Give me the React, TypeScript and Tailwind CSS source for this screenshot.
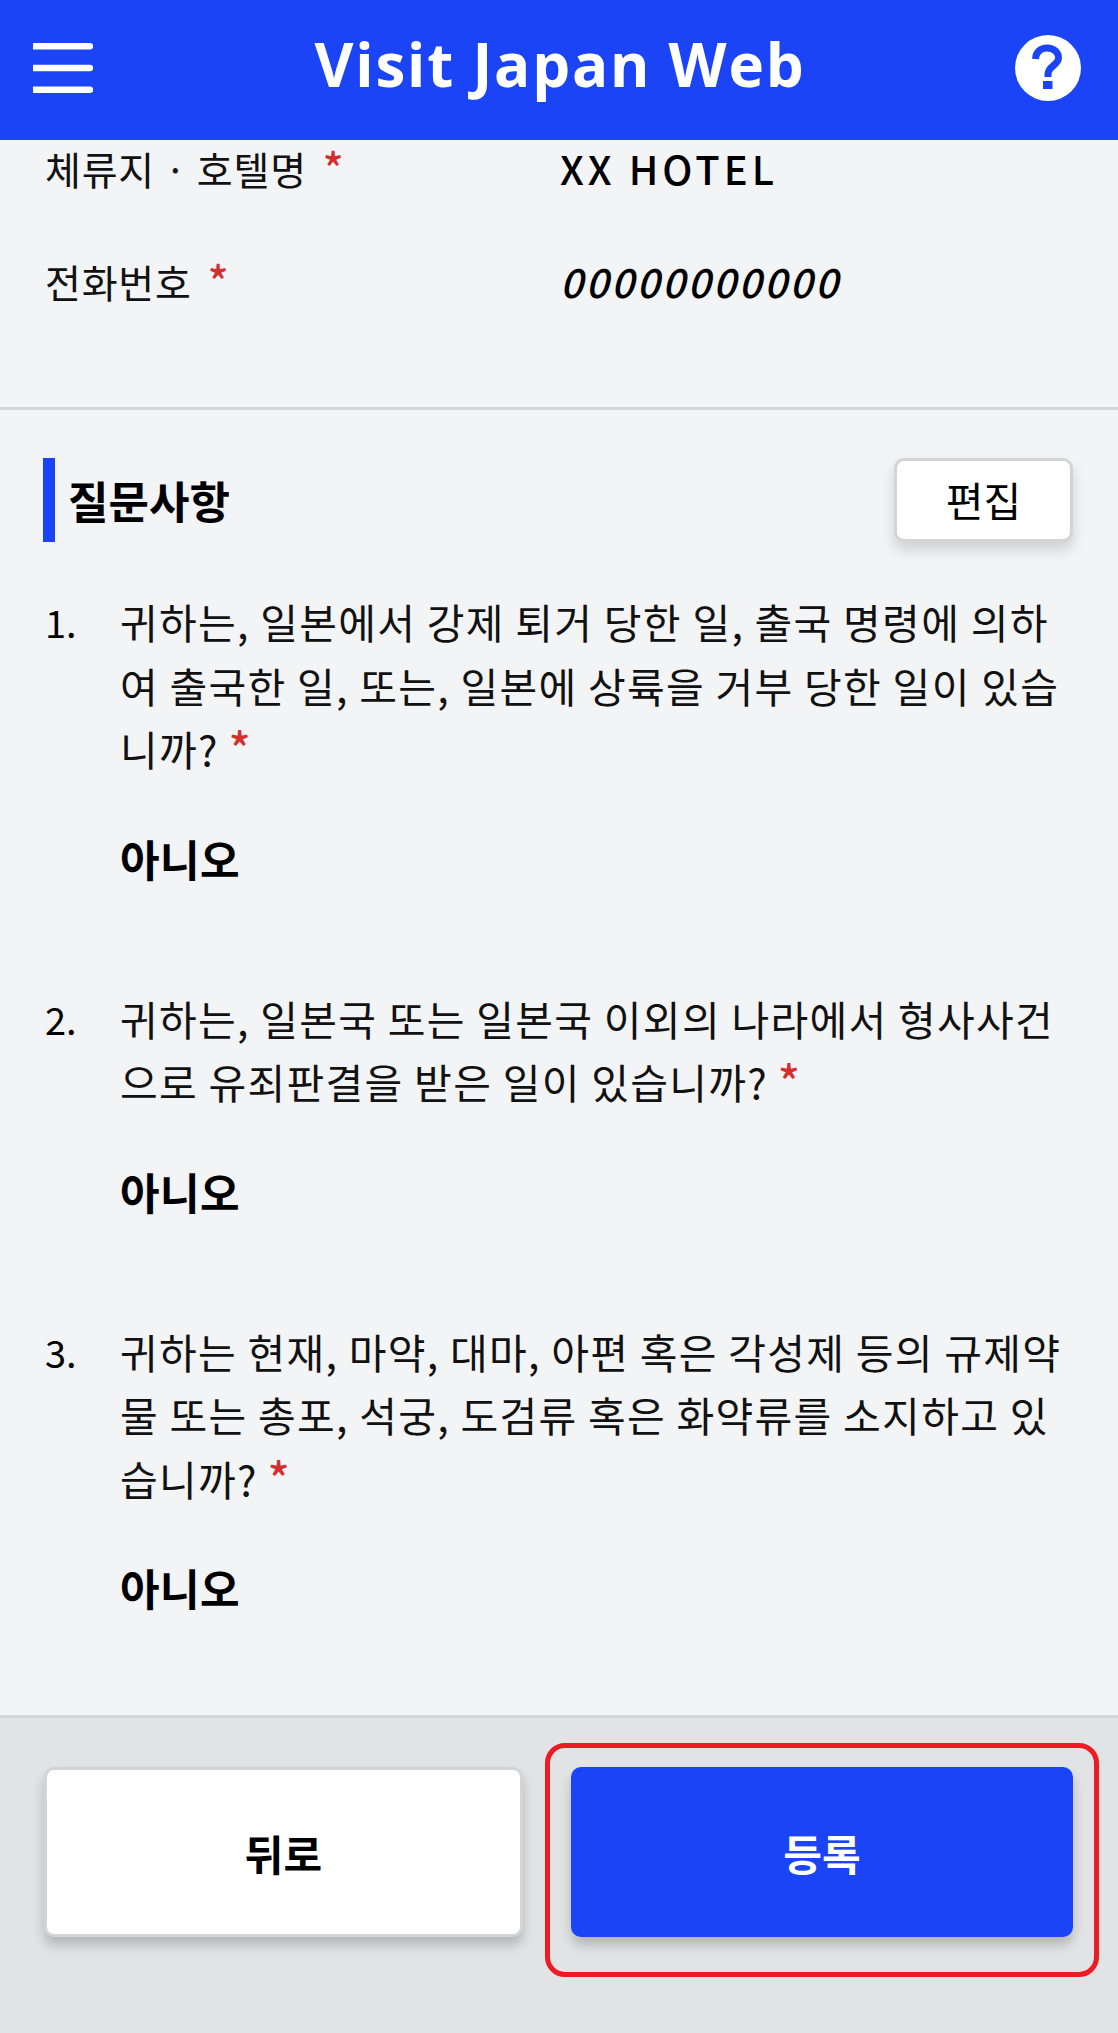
const KR = "font-['Noto_Sans_CJK_KR','Noto_Sans',sans-serif]"

function Star({ gap }: { gap: string }) {
  return <span className={`inline-block leading-none text-[#d32f2f] text-[1.1em] font-medium ${gap}`}>*</span>
}

function InfoRow({ label, value, valueClass }: { label: string; value: string; valueClass: string }) {
  return (
    <div className="flex items-center h-[64px] leading-[64px]">
      <div className="w-[515px] text-[39px] tracking-[0.8px] text-[#111]">
        {label}
        <Star gap="ml-[16px]" />
      </div>
      <div className={`text-[40px] font-medium text-black ${valueClass}`}>{value}</div>
    </div>
  )
}

function Question({ num, text, answer }: { num: string; text: string; answer: string }) {
  return (
    <div className="flex">
      <div className="w-[75px] shrink-0 text-[38px] leading-[64px]">{num}</div>
      <div className="flex-1">
        <div className="text-[41px] leading-[63.5px] tracking-[1.3px] text-[#111]">
          {text}
          <Star gap="ml-[10px]" />
        </div>
        <div className="mt-[45px] text-[43px] font-bold leading-[64px] tracking-[0.5px] text-black">{answer}</div>
      </div>
    </div>
  )
}

export default function App() {
  return (
    <div className={`${KR} w-full h-[2033px] flex flex-col bg-[#f3f4f6] overflow-hidden`}>
      <header className="h-[140px] shrink-0 bg-[#1b44f6] flex items-center justify-between pl-[33px] pr-[37px] pb-[4px]">
        <svg width="60" height="50" viewBox="0 0 60 50" fill="#fff">
          <path d="M0 0H57a3.25 3.25 0 0 1 0 6.5H0Z" />
          <path d="M0 21.75H57a3.25 3.25 0 0 1 0 6.5H0Z" />
          <path d="M0 43.5H57a3.25 3.25 0 0 1 0 6.5H0Z" />
        </svg>
        <div className="font-['Open_Sans',sans-serif] font-bold text-white text-[60px] tracking-[1.8px] mb-[8px] ml-[12px]">Visit Japan Web</div>
        <svg width="66" height="66" viewBox="0 0 66 66">
          <circle cx="33" cy="33" r="33" fill="#fff" />
          <path d="M20.5 24C21 16.5 26 13 32 13C39 13 43.5 17.5 43.5 23C43.5 30 33 31 33 39V42" fill="none" stroke="#1b44f6" strokeWidth="7" />
          <rect x="28" y="46" width="9.5" height="8" fill="#1b44f6" />
        </svg>
      </header>

      <main className="flex-1 overflow-hidden">
        <div className="px-[45px] h-[270px] flex flex-col gap-[49px] border-b-[3px] border-[#d4d4d4]">
          <div className="-mt-[4px]">
            <InfoRow label="체류지 · 호텔명" value="XX HOTEL" valueClass="tracking-[4px]" />
          </div>
          <InfoRow label="전화번호" value="00000000000" valueClass="italic tracking-[2.7px]" />
        </div>
        <div className="pl-[43px] pr-[45px] pt-[48px]">
          <div className="flex items-center justify-between h-[84px]">
            <div className="border-l-[12px] border-[#1b44f6] h-[84px] pl-[13px] flex items-center text-[44px] font-bold text-black">질문사항</div>
            <button className="w-[179px] h-[84px] bg-white rounded-[10px] border-[3px] border-[#d4d4d4] shadow-[0_8px_14px_rgba(0,0,0,0.15)] text-[41px] text-black">편집</button>
          </div>
          <div className="pl-[2px] mt-[48px] flex flex-col gap-[97px]">
            <Question num="1." text="귀하는, 일본에서 강제 퇴거 당한 일, 출국 명령에 의하여 출국한 일, 또는, 일본에 상륙을 거부 당한 일이 있습니까?" answer="아니오" />
            <Question num="2." text="귀하는, 일본국 또는 일본국 이외의 나라에서 형사사건으로 유죄판결을 받은 일이 있습니까?" answer="아니오" />
            <Question num="3." text="귀하는 현재, 마약, 대마, 아편 혹은 각성제 등의 규제약물 또는 총포, 석궁, 도검류 혹은 화약류를 소지하고 있습니까?" answer="아니오" />
          </div>
        </div>
      </main>

      <footer className="h-[318px] shrink-0 bg-[#e1e3e5] border-t-[3px] border-[#d4d4d4] flex gap-[48px] pl-[44px] pr-[45px] pt-[49px]">
        <button className="w-[479px] h-[170px] bg-white rounded-[10px] border-[3px] border-[#d4d4d4] shadow-[0_8px_12px_rgba(0,0,0,0.2)] text-[42px] font-bold text-black">뒤로</button>
        <div className="relative">
          <button className="w-[502px] h-[170px] bg-[#1b44f6] rounded-[10px] shadow-[0_8px_12px_rgba(0,0,0,0.2)] text-[42px] font-bold text-white">등록</button>
          <div className="absolute left-[-26px] top-[-24px] w-[554px] h-[234px] rounded-[20px] border-[5px] border-[#ed1c24]" />
        </div>
      </footer>
    </div>
  )
}
